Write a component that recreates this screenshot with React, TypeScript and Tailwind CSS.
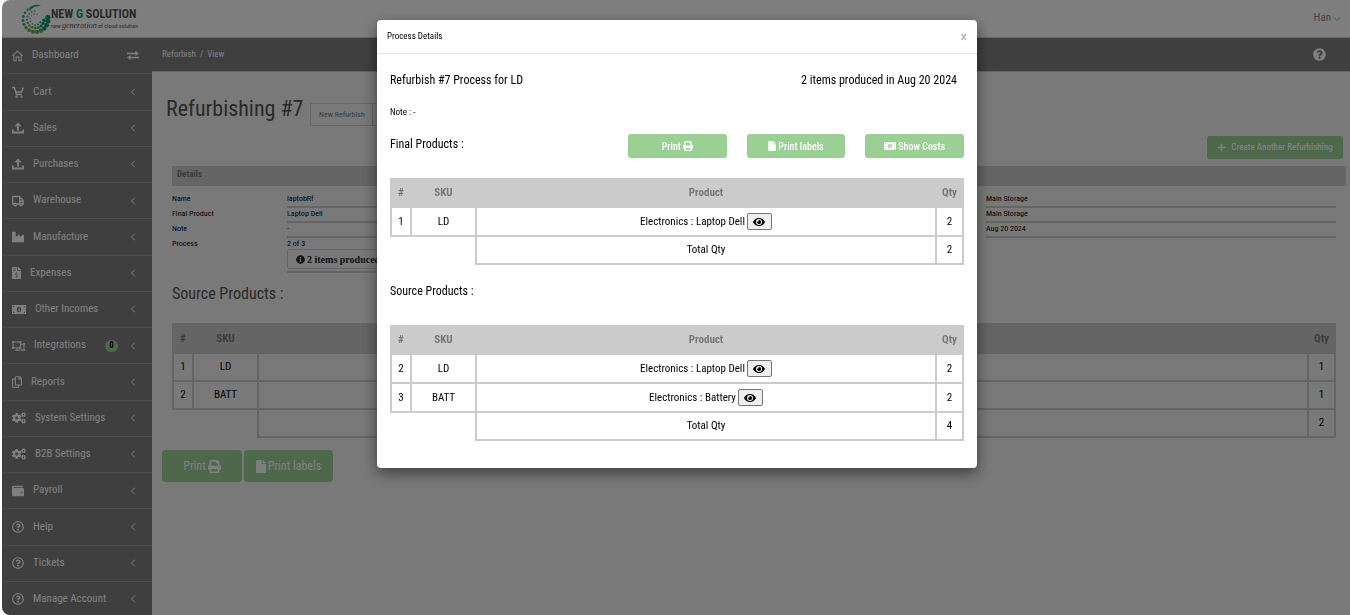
import React from "react";
import {
  FaCogs,
  FaEye,
  FaFile,
  FaFileInvoiceDollar,
  FaIndustry,
  FaInfoCircle,
  FaPlus,
  FaPrint,
  FaQuestionCircle,
  FaRegCopy,
  FaRegObjectUngroup,
  FaRegQuestionCircle,
  FaWallet,
} from "react-icons/fa";
import { FiChevronDown, FiChevronLeft } from "react-icons/fi";

type IconProps = { className?: string };

const HomeIcon = ({ className }: IconProps) => (
  <svg viewBox="0 0 24 24" className={className} fill="none" stroke="currentColor" strokeWidth="2.2" aria-hidden="true">
    <path d="M1 11L12 1.500 23 11M4 9.500V22.500h5V14h6v8.500h5V9.500" />
  </svg>
);

const CartIcon = ({ className }: IconProps) => (
  <svg viewBox="0 0 24 24" className={className} fill="none" stroke="currentColor" strokeWidth="3" aria-hidden="true">
    <path d="M0 3h5l4 14h11M22.500 3l-3.500 9H8" />
    <circle cx="9" cy="21.5" r="2.300" fill="currentColor" stroke="none" />
    <circle cx="19" cy="21.5" r="2.300" fill="currentColor" stroke="none" />
  </svg>
);

const UploadIcon = ({ className }: IconProps) => (
  <svg viewBox="0 0 24 24" className={className} fill="currentColor" aria-hidden="true">
    <path d="M12 1l7 7.500h-5V17h-4V8.500H5zM0 15h3.500v4h17v-4H24v8H0z" />
  </svg>
);

const TruckIcon = ({ className }: IconProps) => (
  <svg viewBox="0 0 24 22" className={className} fill="none" stroke="currentColor" strokeWidth="2.600" aria-hidden="true">
    <path d="M4 17H1.500V2h14v15H9M15.500 6h4l3 5v6h-2M15.500 11H22" />
    <circle cx="6.500" cy="18" r="2.500" />
    <circle cx="18" cy="18" r="2.500" />
  </svg>
);

const SwapIcon = ({ className }: IconProps) => (
  <svg viewBox="0 0 24 18" className={className} fill="currentColor" aria-hidden="true">
    <path d="M0 3.500h17V0l7 5-7 5V6.500H0zM24 11.500H7V8l-7 5 7 5v-3.500h17z" />
  </svg>
);

const MoneyIcon = ({ className }: IconProps) => (
  <svg viewBox="0 0 28 18" className={className} fill="currentColor" fillRule="evenodd" aria-hidden="true">
    <path d="M0 0h28v18H0zM14 3.500c-2.600 0-4.500 2.400-4.500 5.500s1.900 5.500 4.500 5.500 4.500-2.400 4.500-5.500-1.900-5.500-4.500-5.500zM2 2v3l3-3zM26 2h-3l3 3zM2 16h3l-3-3zM26 16v-3l-3 3z" />
    <path d="M12.500 6.500l1.200-.8h1.300v5h1v1.300h-3.400v-1.300h1V7.500h-1z" />
  </svg>
);

type Item = {
  label: string;
  icon: React.ComponentType<IconProps>;
  size: string;
  badge?: string;
};

const items: Item[] = [
  { label: "Cart", icon: CartIcon, size: "w-3 h-3" },
  { label: "Sales", icon: UploadIcon, size: "w-3 h-3" },
  { label: "Purchases", icon: UploadIcon, size: "w-3 h-3" },
  { label: "Warehouse", icon: TruckIcon, size: "w-3 h-3" },
  { label: "Manufacture", icon: FaIndustry, size: "w-3 h-3" },
  { label: "Expenses", icon: FaFileInvoiceDollar, size: "w-[9px] h-3" },
  { label: "Other Incomes", icon: MoneyIcon, size: "w-[14px] h-[9px]" },
  { label: "Integrations", icon: FaRegObjectUngroup, size: "w-[13px] h-3", badge: "0" },
  { label: "Reports", icon: FaRegCopy, size: "w-[10px] h-3" },
  { label: "System Settings", icon: FaCogs, size: "w-[14px] h-3" },
  { label: "B2B Settings", icon: FaCogs, size: "w-[14px] h-3" },
  { label: "Payroll", icon: FaWallet, size: "w-3 h-3" },
  { label: "Help", icon: FaRegQuestionCircle, size: "w-3 h-3" },
  { label: "Tickets", icon: FaRegQuestionCircle, size: "w-3 h-3" },
  { label: "Manage Account", icon: FaRegQuestionCircle, size: "w-3 h-3" },
];

const rings = [
  { r: 12.5, start: -10, end: 250, n: 15, min: 1.1, max: 2.6 },
  { r: 8.5, start: 5, end: 265, n: 13, min: 0.8, max: 1.7 },
  { r: 5.5, start: 30, end: 285, n: 9, min: 0.6, max: 1 },
];

function LogoMark() {
  return (
    <svg viewBox="0 0 30 32" className="h-8 w-[30px]" aria-hidden="true">
      {rings.flatMap((ring) =>
        Array.from({ length: ring.n }, (_, i) => {
          const t = i / (ring.n - 1);
          const a = ((ring.start + (ring.end - ring.start) * t) * Math.PI) / 180;
          const x = 14.5 + Math.cos(a) * ring.r;
          const y = 16.5 + Math.sin(a) * ring.r;
          const size = ring.max - (ring.max - ring.min) * t;
          const fill = t < 0.25 ? "#0f9a78" : t < 0.7 ? "#5aa85a" : "#3aa87a";
          return <circle key={`${ring.r}-${i}`} cx={x} cy={y} r={size} fill={fill} />;
        })
      )}
      <path d="M8 5c4-4 9-4 12-2-5 0-9 1-11 5z" fill="#36a57c" />
    </svg>
  );
}

type Line = { n: number; sku: string; product?: string; qty: number };

function ProductTable({ lines, total, modal }: { lines: Line[]; total: number; modal?: boolean }) {
  const cell = modal
    ? "border-2 border-[#cbcbcb] p-0 h-[29px]"
    : "border-2 border-[#cbcbcb] p-0 h-7";
  return (
    <table className="w-full table-fixed border-collapse text-center text-[11px] leading-4 text-black">
      <colgroup>
        <col className="w-5" />
        <col className="w-[65px]" />
        <col />
        <col className="w-[27px]" />
      </colgroup>
      <thead>
        <tr className={modal ? "h-7 bg-[#cbcbcb] text-[#777]" : "h-[29px] bg-[#cbcbcb] text-[#777]"}>
          <th className="border-2 border-[#cbcbcb] p-0 font-bold">#</th>
          <th className="border-2 border-[#cbcbcb] p-0 font-bold">SKU</th>
          <th className="border-2 border-[#cbcbcb] p-0 font-bold">Product</th>
          <th className="border-2 border-[#cbcbcb] p-0 font-bold">Qty</th>
        </tr>
      </thead>
      <tbody>
        {lines.map((l) => (
          <tr key={l.n}>
            <td className={cell}>{l.n}</td>
            <td className={cell}>{l.sku}</td>
            <td className={cell}>
              {l.product && (
                <span className="inline-flex items-center gap-[2px]">
                  {l.product}
                  <button
                    type="button"
                    aria-label="View product"
                    className="flex h-[17px] w-[25px] items-center justify-center rounded-[2px] border border-[#767676] bg-[#efefef]"
                  >
                    <FaEye className="size-3" />
                  </button>
                </span>
              )}
            </td>
            <td className={cell}>{l.qty}</td>
          </tr>
        ))}
        <tr>
          <td colSpan={2} className="h-7 p-0" />
          <td className="border-2 border-[#cbcbcb] p-0">{modal ? "Total Qty" : ""}</td>
          <td className="border-2 border-[#cbcbcb] p-0">{total}</td>
        </tr>
      </tbody>
    </table>
  );
}

function Field({ label, value }: { label: string; value: string }) {
  return (
    <div className="flex h-[15px] leading-[12px]">
      <dt className="w-[115px] shrink-0">{label}</dt>
      <dd className="flex-1 border-b-2 border-[#cbcbcb]">{value}</dd>
    </div>
  );
}

function ModalButton({ children }: { children: React.ReactNode }) {
  return (
    <button
      type="button"
      className="flex h-6 items-center justify-center gap-[2px] rounded-[3px] bg-[#9bd095] text-[10px] font-medium text-white"
    >
      {children}
    </button>
  );
}

function Sidebar() {
  return (
    <nav className="w-[150px] shrink-0 overflow-hidden bg-[#7f7f7f] text-[11px] text-white">
      <ul className="grid min-h-[580px] auto-rows-fr">
        <li className="flex items-center border-b border-[#999] pr-[13px] pl-[10px]">
          <a href="#dashboard" className="flex flex-1 items-center gap-[9px]">
            <HomeIcon className="h-3 w-[11px]" />
            Dashboard
          </a>
          <button type="button" aria-label="Collapse menu">
            <SwapIcon className="h-[9px] w-3" />
          </button>
        </li>
        {items.map(({ label, icon: Icon, size, badge }) => (
          <li key={label} className="border-b border-[#999]">
            <a href={`#${label}`} className="flex h-full items-center gap-[9px] pr-[13px] pl-[10px]">
              <Icon className={size} />
              <span className="flex-1">{label}</span>
              {badge && (
                <span className="flex h-3 w-[13px] items-center justify-center rounded-full bg-[#9bd095] text-[9px] font-bold text-black">
                  {badge}
                </span>
              )}
              <FiChevronLeft className="size-3" />
            </a>
          </li>
        ))}
      </ul>
    </nav>
  );
}

export default function App() {
  return (
    <div className="h-screen overflow-hidden bg-white pl-[2px] font-['Roboto_Condensed','Liberation_Sans_Narrow',Roboto,sans-serif]">
      <div className="flex h-full flex-col overflow-hidden rounded-l-lg bg-[#f3f3f3]">
        <header className="flex h-[38px] shrink-0 items-center justify-between border-b border-[#ccc] bg-white pr-[7px] pl-[19px]">
          <a href="#home" className="flex items-center text-[#555]">
            <LogoMark />
            <span className="flex flex-col">
              <span className="text-[12px] leading-[14px] font-bold whitespace-nowrap">
                NEW <span className="text-[#0f9a78]">G</span> SOLUTION
              </span>
              <span className="text-[6px] leading-[10px] whitespace-nowrap">
                new <i className="font-['Liberation_Serif',serif] text-[8px]">generation</i> of cloud solution
              </span>
            </span>
          </a>
          <button type="button" className="flex items-center text-[11px] text-[#888]">
            Han
            <FiChevronDown className="size-3 text-[#7db978]" />
          </button>
        </header>

        <div className="flex min-h-0 flex-1">
          <Sidebar />
          <main className="min-w-0 flex-1">
            <div className="flex h-[34px] items-center justify-between border-b border-[#ccc] bg-[#7f7f7f] pr-6 pl-[10px] text-[9px] text-white">
              <p className="flex gap-1">
                <a href="#refurbish">Refurbish</a>
                <span>/</span>
                <a href="#view">View</a>
              </p>
              <FaQuestionCircle className="size-[13px]" />
            </div>

            <div className="flex items-end gap-[7px] pt-[19px] pl-[14px]">
              <h1 className="text-[22px] leading-[35px] text-[#555]">Refurbishing #7</h1>
              <div className="flex">
                <button type="button" className="h-[23px] w-[63px] border border-[#ccc] text-[8px] text-[#777]">
                  New Refurbish
                </button>
                <button type="button" aria-label="More actions" className="-ml-px h-[23px] w-[63px] border border-[#ccc]" />
              </div>
            </div>

            <div className="flex justify-end pt-[10px] pr-[7px]">
              <button
                type="button"
                className="flex h-[23px] w-[136px] items-center justify-center gap-[5px] rounded-[3px] bg-[#9bd095] text-[9px] font-medium text-white"
              >
                <FaPlus className="size-[9px]" />
                Create Another Refurbishing
              </button>
            </div>

            <section className="pt-[7px] pr-1 pl-5">
              <h2 className="h-5 bg-[#cbcbcb] pl-[5px] text-[9px] leading-[17px] font-bold text-[#777]">Details</h2>
              <dl className="grid grid-cols-2 pt-[7px] pr-[10px] text-[8px] text-black">
                <div className="pr-4">
                  <Field label="Name" value="laptobRf" />
                  <Field label="Final Product" value="Laptop Dell" />
                  <Field label="Note" value="-" />
                  <div className="flex leading-[11px]">
                    <dt className="w-[115px] shrink-0">Process</dt>
                    <dd className="flex-1 border-b-2 border-[#cbcbcb] pb-[2px]">
                      2 of 3
                      <button
                        type="button"
                        className="flex h-5 items-center gap-[2px] rounded-[2px] border border-[#ccc] px-2 font-['Liberation_Serif',serif] text-[10px] font-bold text-[#222]"
                      >
                        <FaInfoCircle className="size-[9px]" />2 items produced in Aug 20 2024
                      </button>
                    </dd>
                  </div>
                </div>
                <div className="pl-[117px]">
                  <Field label="Storage" value="Main Storage" />
                  <Field label="Final Storage" value="Main Storage" />
                  <Field label="Date" value="Aug 20 2024" />
                </div>
              </dl>
            </section>

            <section className="pt-[10px] pr-[14px] pl-5">
              <h2 className="pb-[18px] text-base leading-[22px] text-[#555]">Source Products :</h2>
              <ProductTable
                lines={[
                  { n: 1, sku: "LD", qty: 1 },
                  { n: 2, sku: "BATT", qty: 1 },
                ]}
                total={2}
              />
            </section>

            <div className="flex gap-[2px] pt-3 pl-[10px] text-[12px] text-white">
              <button type="button" className="flex h-8 w-20 items-center justify-center gap-[2px] rounded bg-[#9bd095]">
                Print <FaPrint className="size-[13px]" />
              </button>
              <button type="button" className="flex h-8 w-[89px] items-center justify-center gap-[2px] rounded bg-[#9bd095]">
                <FaFile className="h-[13px] w-[10px]" /> Print labels
              </button>
            </div>
          </main>
        </div>
      </div>

      <div className="fixed inset-0 left-[2px] overflow-hidden rounded-l-lg bg-black/50 pt-5 pl-[2px]">
        <div
          role="dialog"
          aria-modal="true"
          aria-labelledby="dialog-title"
          className="mx-auto w-[600px] rounded bg-white text-black shadow-[0_5px_15px_rgba(0,0,0,0.5)]"
        >
          <div className="flex h-[34px] items-center justify-between border-b border-[#e5e5e5] px-[10px]">
            <h2 id="dialog-title" className="text-[9px]">
              Process Details
            </h2>
            <button type="button" aria-label="Close" className="text-[14px] leading-4 font-bold text-[#bbb]">
              ×
            </button>
          </div>
          <div className="px-[13px] pb-[27px]">
            <div className="flex justify-between pt-4 pr-[7px] text-[12px] leading-5">
              <h3>Refurbish #7 Process for LD</h3>
              <p>2 items produced in Aug 20 2024</p>
            </div>
            <p className="pt-4 text-[9px] leading-3">Note : -</p>
            <div className="flex items-start justify-between pt-4 pb-5">
              <h3 className="text-[12px] leading-5">Final Products :</h3>
              <div className="grid w-[336px] grid-cols-3 gap-5">
                <ModalButton>
                  Print <FaPrint className="size-[10px]" />
                </ModalButton>
                <ModalButton>
                  <FaFile className="h-[10px] w-2" /> Print labels
                </ModalButton>
                <ModalButton>
                  <MoneyIcon className="h-2 w-3" /> Show Costs
                </ModalButton>
              </div>
            </div>
            <ProductTable modal lines={[{ n: 1, sku: "LD", product: "Electronics : Laptop Dell", qty: 2 }]} total={2} />
            <h3 className="pt-4 pb-6 text-[12px] leading-5">Source Products :</h3>
            <ProductTable
              modal
              lines={[
                { n: 2, sku: "LD", product: "Electronics : Laptop Dell", qty: 2 },
                { n: 3, sku: "BATT", product: "Electronics : Battery", qty: 2 },
              ]}
              total={4}
            />
          </div>
        </div>
      </div>
    </div>
  );
}
